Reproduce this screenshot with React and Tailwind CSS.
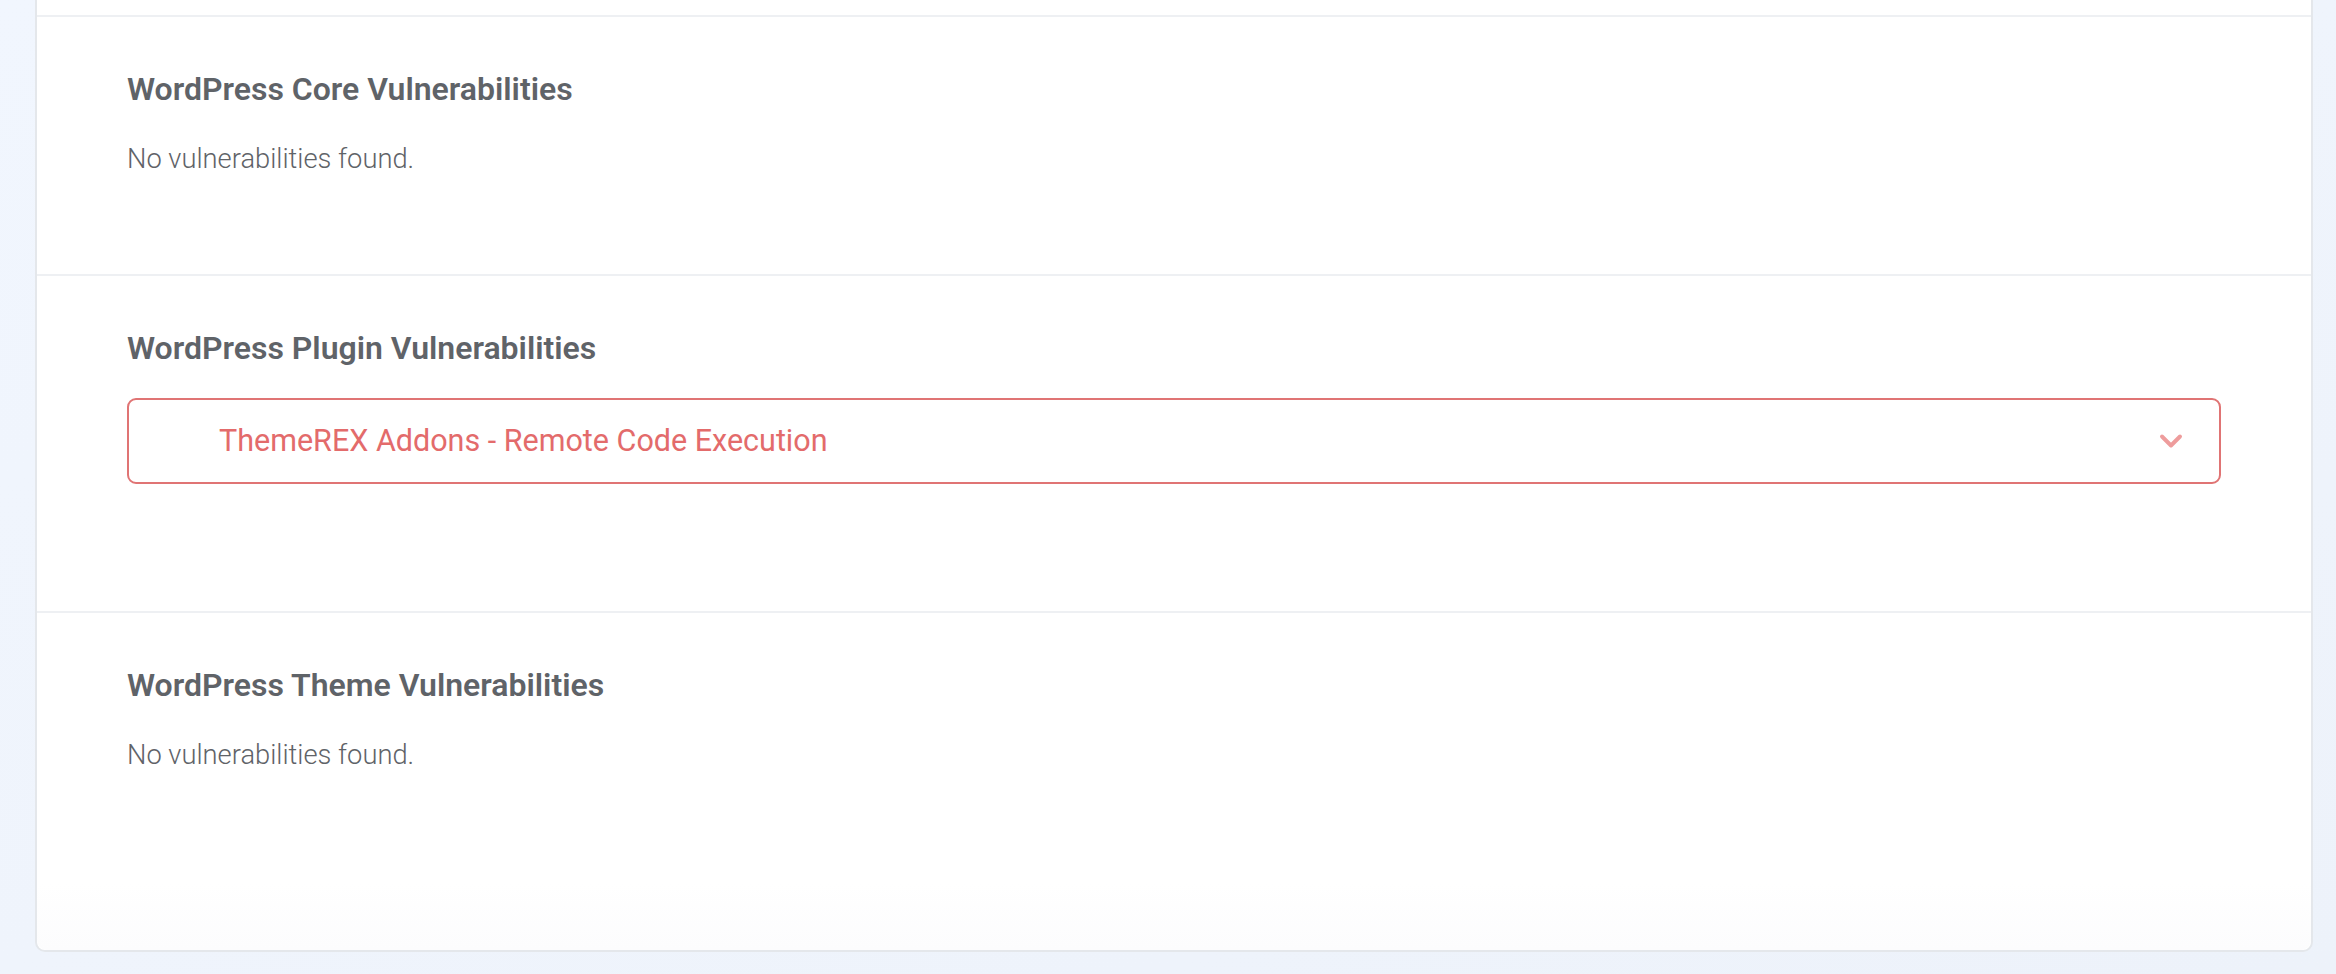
import { ChevronDown } from 'lucide-react'

function Section({ title, children, className = '' }) {
  return (
    <section className={`border-t-2 border-[#eef0f3] px-[90px] pt-[53px] ${className}`}>
      <h2 className="text-[32px] leading-[38px] font-semibold text-[#5f6368] mb-[31px]">{title}</h2>
      {children}
    </section>
  )
}

function Empty() {
  return <p className="text-[27.3px] leading-[40px] font-light text-[#5f6368]">No vulnerabilities found.</p>
}

export default function App() {
  return (
    <div className="min-h-screen bg-gradient-to-br from-[#f1f6fe] to-[#edf2fa] pl-[35px] pr-[23px] pb-[22px] font-['Roboto',sans-serif]">
      <div className="bg-white border-x-2 border-b-2 border-[#e4e7eb] rounded-b-[10px] pt-[15px]">
        {/* core */}
        <Section title="WordPress Core Vulnerabilities" className="pb-[95px]">
          <Empty />
        </Section>

        {/* plugins */}
        <Section title="WordPress Plugin Vulnerabilities" className="pb-[127px]">
          <button className="w-full h-[86px] border-2 border-[#e07474] rounded-[9px] flex items-center pl-[90px] pr-[30px] text-left">
            <span className="flex-1 text-[30.5px] text-[#e36b6b]">ThemeREX Addons - Remote Code Execution</span>
            <ChevronDown size={36} strokeWidth={2.6} className="text-[#ee9c9c]" />
          </button>
        </Section>

        {/* themes */}
        <Section title="WordPress Theme Vulnerabilities" className="pb-[175px] bg-gradient-to-b from-white from-80% to-[#fcfcfd] rounded-b-[10px]">
          <Empty />
        </Section>
      </div>
    </div>
  )
}
